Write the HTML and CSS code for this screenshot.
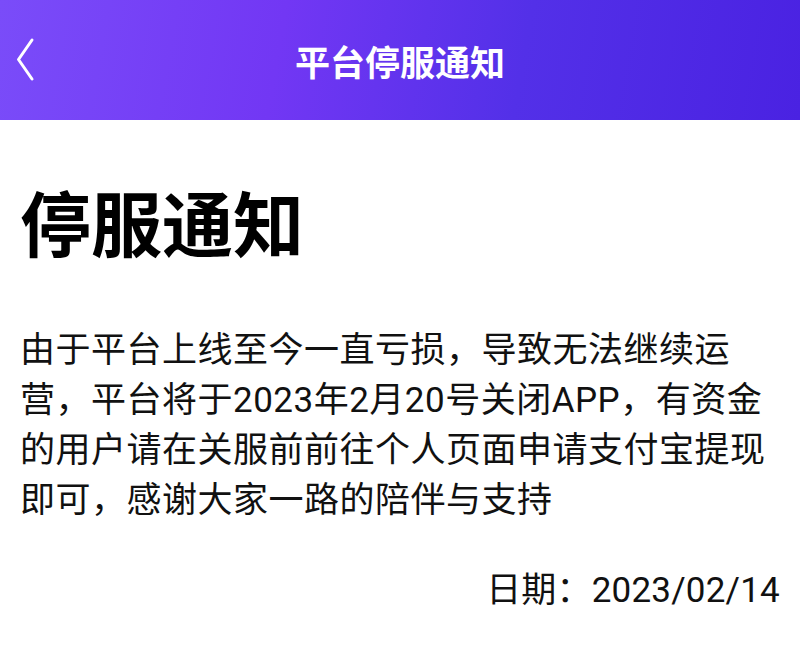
FILE: index.html
```html
<!DOCTYPE html>
<html lang="zh-CN">
<head>
<meta charset="utf-8">
<title>平台停服通知</title>
<link rel="stylesheet" href="styles.css">
</head>
<body>
<header class="topbar">
  <span class="back" aria-label="返回">
    <svg width="40" height="60" viewBox="0 0 40 60"><polyline points="32,10 18.5,29.5 32,49" fill="none" stroke="#fff" stroke-width="3" stroke-linecap="round" stroke-linejoin="round"/></svg>
  </span>
  <h2 class="topbar-title">平台停服通知</h2>
</header>
<main class="content">
  <h1 class="title">停服通知</h1>
  <p class="body-text">由于平台上线至今一直亏损，导致无法继续运营，平台将于2023年2月20号关闭APP，有资金的用户请在关服前前往个人页面申请支付宝提现即可，感谢大家一路的陪伴与支持</p>
  <p class="date">日期：2023/02/14</p>
</main>
</body>
</html>
```
FILE: styles.css
```css
html, body {
  margin: 0;
  padding: 0;
  background: #fff;
  font-family: Roboto, "Noto Sans CJK SC", "Noto Sans", sans-serif;
  color: #111;
}
.topbar {
  position: relative;
  height: 120px;
  display: flex;
  align-items: center;
  justify-content: center;
  background: linear-gradient(100deg, #7a4cf9 0%, #7237f4 35%, #5330e8 65%, #4a22e2 100%);
}
.back {
  position: absolute;
  left: 0;
  top: 30px;
  width: 40px;
  height: 60px;
  display: block;
}
.back svg { display: block; }
.topbar-title {
  margin: 0;
  color: #fff;
  font-family: "Noto Sans CJK SC", sans-serif;
  font-size: 35px;
  font-weight: 700;
  line-height: 1;
}
.content {
  padding: 0 20px;
}
.title {
  margin: 51px 0 0;
  font-family: "Noto Sans CJK SC", sans-serif;
  font-size: 71px;
  font-weight: 700;
  line-height: 98px;
  color: #000;
}
.body-text {
  margin: 57px 0 0;
  font-size: 35px;
  line-height: 50px;
  letter-spacing: 0.5px;
}
.date {
  margin: 40px 0 0;
  text-align: right;
  font-size: 35px;
  line-height: 50px;
  letter-spacing: 0.2px;
}
```
